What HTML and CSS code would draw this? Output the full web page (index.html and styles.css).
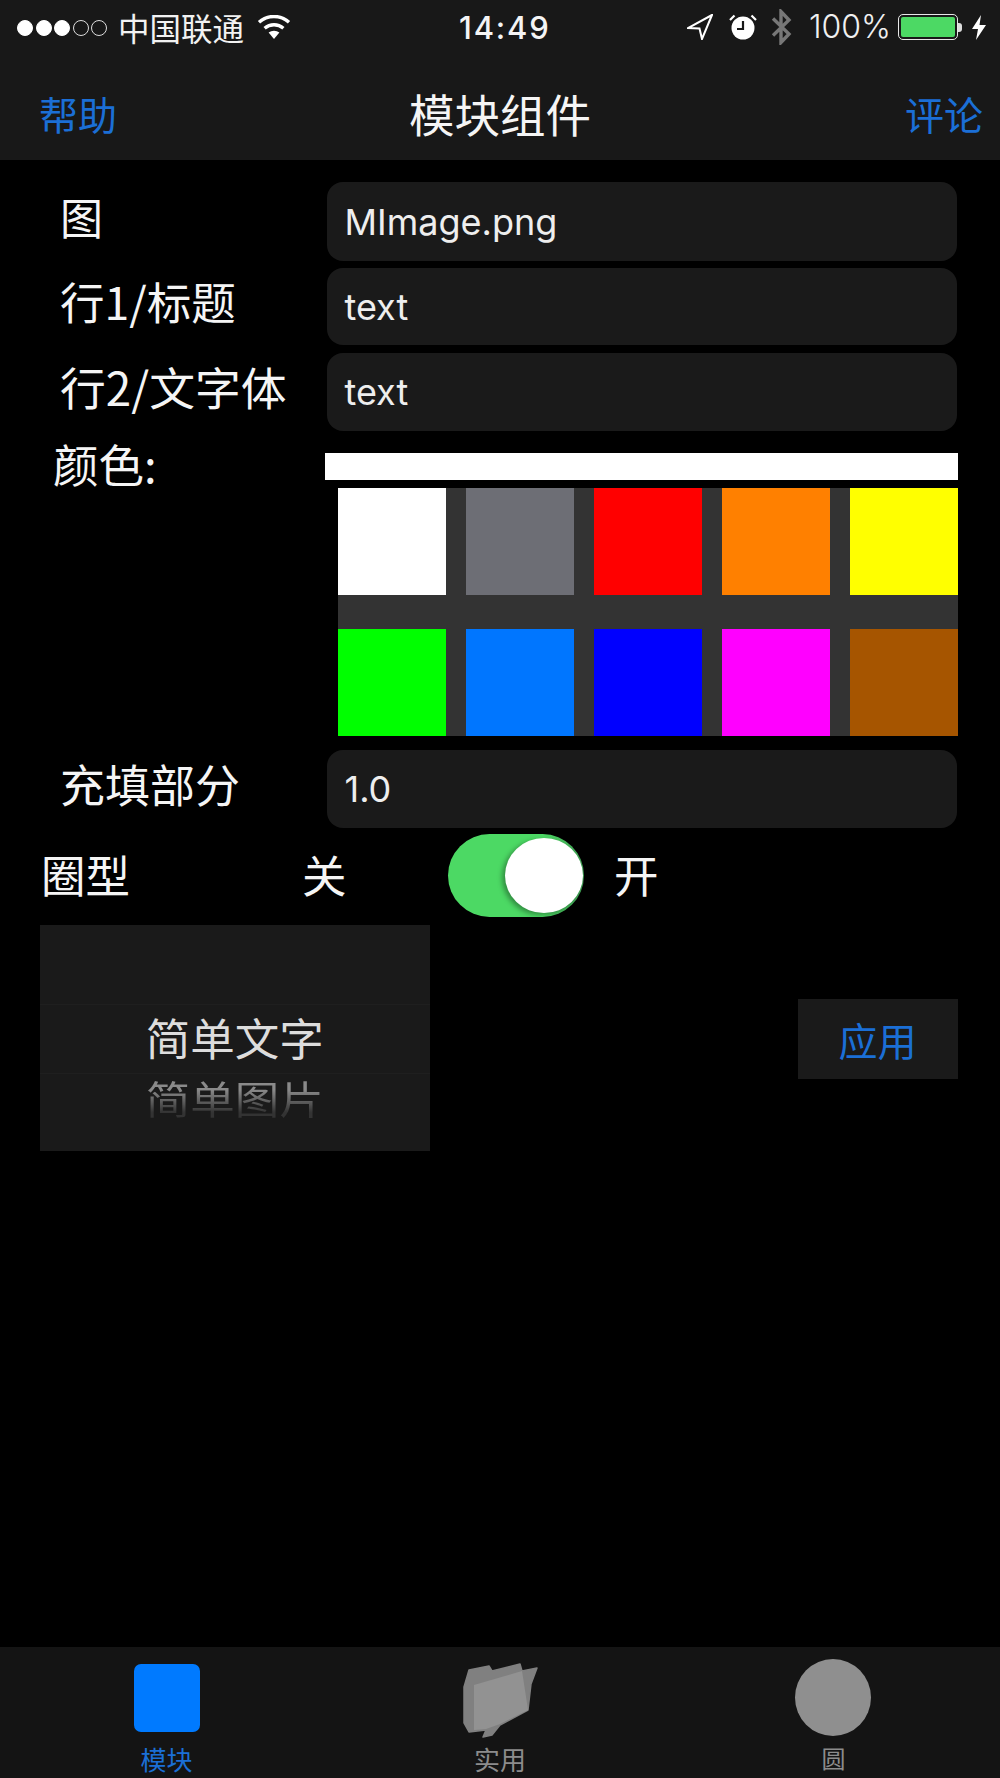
FILE: index.html
```html
<!DOCTYPE html>
<html lang="zh-CN">
<head>
<meta charset="utf-8">
<title>模块组件</title>
<link rel="stylesheet" href="styles.css">
</head>
<body>
<div class="page">
  <header class="top">
    <div class="status">
      <div class="status-left">
        <div class="signal">
          <span class="dot on"></span><span class="dot on"></span><span class="dot on"></span><span class="dot"></span><span class="dot"></span>
        </div>
        <span class="carrier">中国联通</span>
        <svg class="wifi" viewBox="0 0 34 24"><path d="M17 24 11.6 17.6A8.6 8.6 0 0 1 22.4 17.6Z" fill="#fff"/><path d="M7.6 13.2A14.5 14.5 0 0 1 26.4 13.2" fill="none" stroke="#fff" stroke-width="3.4"/><path d="M2 7.2A22.5 22.5 0 0 1 32 7.2" fill="none" stroke="#fff" stroke-width="3.4"/></svg>
      </div>
      <span class="time">14:49</span>
      <div class="status-right">
        <svg class="loc" viewBox="0 0 26 26"><path d="M25 1 1 14 12.5 14.5 15 25Z" fill="none" stroke="#fff" stroke-width="2" stroke-linejoin="miter"/></svg>
        <svg class="alarm" viewBox="0 0 28 26"><circle cx="14" cy="14" r="11.5" fill="#fff"/><path d="M14 7V15H8" fill="none" stroke="#181818" stroke-width="2.2"/><path d="M1 6 5.500 1.500M27 6 22.500 1.500" stroke="#fff" stroke-width="2.200"/></svg>
        <svg class="bt" viewBox="0 0 21 36"><path d="M2 9.500 18 25 10 33.500V2.500L18 11 2 26.500" fill="none" stroke="#777" stroke-width="3.400"/></svg>
        <span class="pct">100%</span>
        <div class="battery"><div class="battery-fill"></div></div>
        <div class="nub"></div>
        <svg class="bolt" viewBox="0 0 14 25"><path d="M9 0 0 14H6L4 25 14 10H7.500Z" fill="#fff"/></svg>
      </div>
    </div>
    <nav class="nav">
      <span class="nav-left">帮助</span>
      <span class="nav-title">模块组件</span>
      <span class="nav-right">评论</span>
    </nav>
  </header>

  <main class="main">
    <div class="row row-a">
      <span class="label">图</span>
      <div class="field">MImage.png</div>
    </div>
    <div class="row row-b">
      <span class="label">行1/标题</span>
      <div class="field">text</div>
    </div>
    <div class="row row-c">
      <span class="label">行2/文字体</span>
      <div class="field">text</div>
    </div>
    <div class="colors">
      <span class="label label-color">颜色:</span>
      <div class="color-col">
        <div class="color-bar"></div>
        <div class="swatches">
          <div class="sw c-white"></div>
          <div class="sw c-gray"></div>
          <div class="sw c-red"></div>
          <div class="sw c-orange"></div>
          <div class="sw c-yellow"></div>
          <div class="sw c-green"></div>
          <div class="sw c-blue"></div>
          <div class="sw c-navy"></div>
          <div class="sw c-magenta"></div>
          <div class="sw c-brown"></div>
        </div>
      </div>
    </div>
    <div class="row row-d">
      <span class="label">充填部分</span>
      <div class="field">1.0</div>
    </div>
    <div class="ring">
      <span class="ring-label">圈型</span>
      <span class="ring-off">关</span>
      <div class="switch"><div class="knob"></div></div>
      <span class="ring-on">开</span>
    </div>
    <div class="lower">
      <div class="picker">
        <div class="picker-row picker-sel">简单文字</div>
        <div class="picker-row picker-next"><span class="picker-fade">简单图片</span></div>
      </div>
      <div class="apply">应用</div>
    </div>
  </main>

  <footer class="tabs">
    <div class="tab tab-a">
      <div class="icon-square"></div>
      <span class="tab-label active">模块</span>
    </div>
    <div class="tab tab-b">
      <svg class="icon-folder" viewBox="0 0 76 76">
        <path d="M1 25 6 8 26 4 29 9 57 2 59 9 74 6 68 22 65 48 37 63 29 73 20 75 23 68 6 70 1 61Z" fill="#808080" stroke="#808080" stroke-width="1.500" stroke-linejoin="round"/>
        <path d="M11 23 59 9 65 48 37 62 23 67 11 68Z" fill="#929292"/>
      </svg>
      <span class="tab-label">实用</span>
    </div>
    <div class="tab tab-c">
      <div class="icon-circle"></div>
      <span class="tab-label tab-narrow">圆</span>
    </div>
  </footer>
</div>
</body>
</html>
```
FILE: styles.css
```css
* { box-sizing: border-box; }
html, body { margin: 0; padding: 0; background: #000; }
body {
  font-family: "Noto Sans CJK SC", "Liberation Sans", sans-serif;
  color: #fff;
}
.page {
  width: 1000px;
  height: 1778px;
  display: flex;
  flex-direction: column;
  overflow: hidden;
}

/* header */
.top { background: #181818; height: 160px; flex: none; }
.status {
  height: 56px;
  display: grid;
  grid-template-columns: 442px auto 1fr;
  align-items: center;
  padding: 0 14px 0 17px;
}
.status-left { display: flex; align-items: center; }
.signal { display: flex; gap: 2.500px; }
.dot { width: 16px; height: 16px; border-radius: 50%; border: 1.500px solid #ddd; }
.dot.on { background: #fff; border-color: #fff; }
.carrier { font-size: 31.500px; line-height: 40px; margin-left: 11px; margin-top: -2px; color: #f2f2f2; }
.wifi { width: 34px; height: 24px; margin-left: 13px; margin-top: -3px; }
.time {
  font-family: Inter, "Liberation Sans", sans-serif;
  font-weight: 500;
  font-size: 31px;
  letter-spacing: 1.800px;
  margin-top: -2px;
  color: #f4f4f4;
}
.status-right { display: flex; align-items: center; justify-content: flex-end; margin-top: -2px; }
.loc { width: 26px; height: 26px; }
.alarm { width: 28px; height: 26px; margin-left: 16px; }
.bt { width: 21px; height: 36px; margin-left: 14px; }
.pct {
  font-family: Inter, "Liberation Sans", sans-serif;
  font-weight: 300;
  font-size: 32px;
  line-height: 40px;
  margin-left: 17px;
  color: #f0f0f0;
}
.battery {
  width: 60px;
  height: 26px;
  margin-left: 7px;
  border: 1.500px solid #e8e8e8;
  border-radius: 5px;
  padding: 2px;
}
.battery-fill { height: 100%; background: #4cd964; border-radius: 2px; }
.nub { width: 4px; height: 9px; background: #ddd; border-radius: 0 3px 3px 0; margin-right: 10px; }
.bolt { width: 14px; height: 25px; }

.nav {
  height: 104px;
  padding-top: 9px;
  display: grid;
  grid-template-columns: 1fr auto 1fr;
  align-items: center;
}
.nav-left, .nav-right { font-size: 39px; line-height: 50px; color: #1b6fd6; }
.nav-left { margin-left: 39px; }
.nav-right { margin-right: 17px; justify-self: end; }
.nav-title { font-size: 45.500px; line-height: 56px; color: #f5f5f5; }

/* form */
.main { flex: 1; padding-top: 22px; }
.row {
  display: grid;
  grid-template-columns: 326.500px 630px;
  height: 79px;
  align-items: center;
}
.row-b { height: 77px; margin-top: 7px; }
.row-c { height: 78px; margin-top: 8px; }
.row-d { height: 78px; margin-top: 14px; }
.label {
  font-size: 44.500px;
  line-height: 54px;
  padding-left: 60px;
  padding-bottom: 12px;
  color: #f5f5f5;
  white-space: nowrap;
}
.row-a .label { font-size: 43px; }
.row-c .label { font-size: 45.800px; }
.row-d .label { font-size: 45px; padding-bottom: 11px; }
.field {
  height: 100%;
  background: #1a1a1a;
  border-radius: 16px;
  padding-left: 18px;
  display: flex;
  align-items: center;
  font-family: Inter, "Liberation Sans", sans-serif;
  font-size: 36px;
  color: #eee;
}
.colors {
  display: grid;
  grid-template-columns: 325px 632.500px;
  margin-top: 22px;
}
.label-color {
  font-size: 45.500px;
  line-height: 20px;
  padding: 0 0 0 53px;
}
.color-bar { height: 27px; background: #fff; }
.swatches {
  margin: 7.500px 0 0 13px;
  display: grid;
  grid-template-columns: repeat(5, 1fr);
  gap: 34.500px 20.500px;
  background: #333;
}
.sw { height: 107px; }
.c-white { background: #fff; }
.c-gray { background: #6d6e75; }
.c-red { background: #f00; }
.c-orange { background: #ff8000; }
.c-yellow { background: #ff0; }
.c-green { background: #0f0; }
.c-blue { background: #0076ff; }
.c-navy { background: #00f; }
.c-magenta { background: #f0f; }
.c-brown { background: #a65500; }

/* ring switch */
.ring {
  display: flex;
  align-items: center;
  height: 83px;
  margin-top: 6px;
  font-size: 44.500px;
  color: #f5f5f5;
}
.ring-label { margin-left: 41px; width: 261px; padding-bottom: 4px; }
.ring-off { width: 146px; padding-bottom: 4px; }
.switch {
  width: 136px;
  height: 83px;
  border-radius: 42px;
  background: linear-gradient(90deg, #4cd964 70%, #3f9b52 100%);
  display: flex;
  justify-content: flex-end;
  align-items: center;
  padding-right: 1px;
}
.knob {
  width: 78px;
  height: 75px;
  border-radius: 50%;
  background: #fff;
  box-shadow: -3px 2px 5px rgba(0, 0, 0, .35);
}
.ring-on { margin-left: 30px; padding-bottom: 4px; }

/* picker + button */
.lower {
  display: flex;
  justify-content: space-between;
  align-items: flex-start;
  margin-top: 8px;
  padding: 0 42.500px 0 40px;
}
.picker {
  width: 389.500px;
  height: 226px;
  background: #1a1a1a;
  padding-top: 79px;
  text-align: center;
}
.picker-row { font-size: 44.500px; white-space: nowrap; }
.picker-sel {
  height: 70px;
  line-height: 64px;
  color: #ddd;
  border-top: 1px solid #1f1f1f;
  border-bottom: 1px solid #1f1f1f;
}
.picker-next { height: 50px; line-height: 48px; }
.picker-fade {
  display: inline-block;
  transform: scaleY(.86);
  background: linear-gradient(#8a8a8a 30%, #333 85%);
  -webkit-background-clip: text;
  background-clip: text;
  color: transparent;
}
.apply {
  width: 160px;
  height: 80px;
  margin-top: 74px;
  background: #1a1a1a;
  display: flex;
  align-items: center;
  justify-content: center;
  font-size: 39px;
  color: #1b6fd6;
}

/* tabs */
.tabs {
  height: 131px;
  flex: none;
  background: #141414;
  display: grid;
  grid-template-columns: 333px 334px 333px;
}
.tab { display: flex; flex-direction: column; align-items: center; }
.tab-a { padding-top: 17px; }
.tab-b { padding-top: 15px; }
.tab-c { padding-top: 12px; }
.icon-square { width: 66px; height: 68px; border-radius: 7px; background: #007aff; margin-left: 1px; }
.icon-folder { width: 76px; height: 76px; display: block; filter: blur(.5px); margin-left: 2px; }
.icon-circle { width: 76px; height: 77px; border-radius: 50%; background: #8f8f8f; margin-left: -1px; }
.tab-label {
  font-size: 26px;
  line-height: 34px;
  color: #8c8c8c;
  white-space: nowrap;
}
.tab-a .tab-label { margin-top: 10px; }
.tab-b .tab-label { margin-top: 4px; }
.tab-c .tab-label { margin-top: 5px; }
.tab-label.active { color: #1b6fd6; }
.tab-narrow { font-size: 24px; }
```
